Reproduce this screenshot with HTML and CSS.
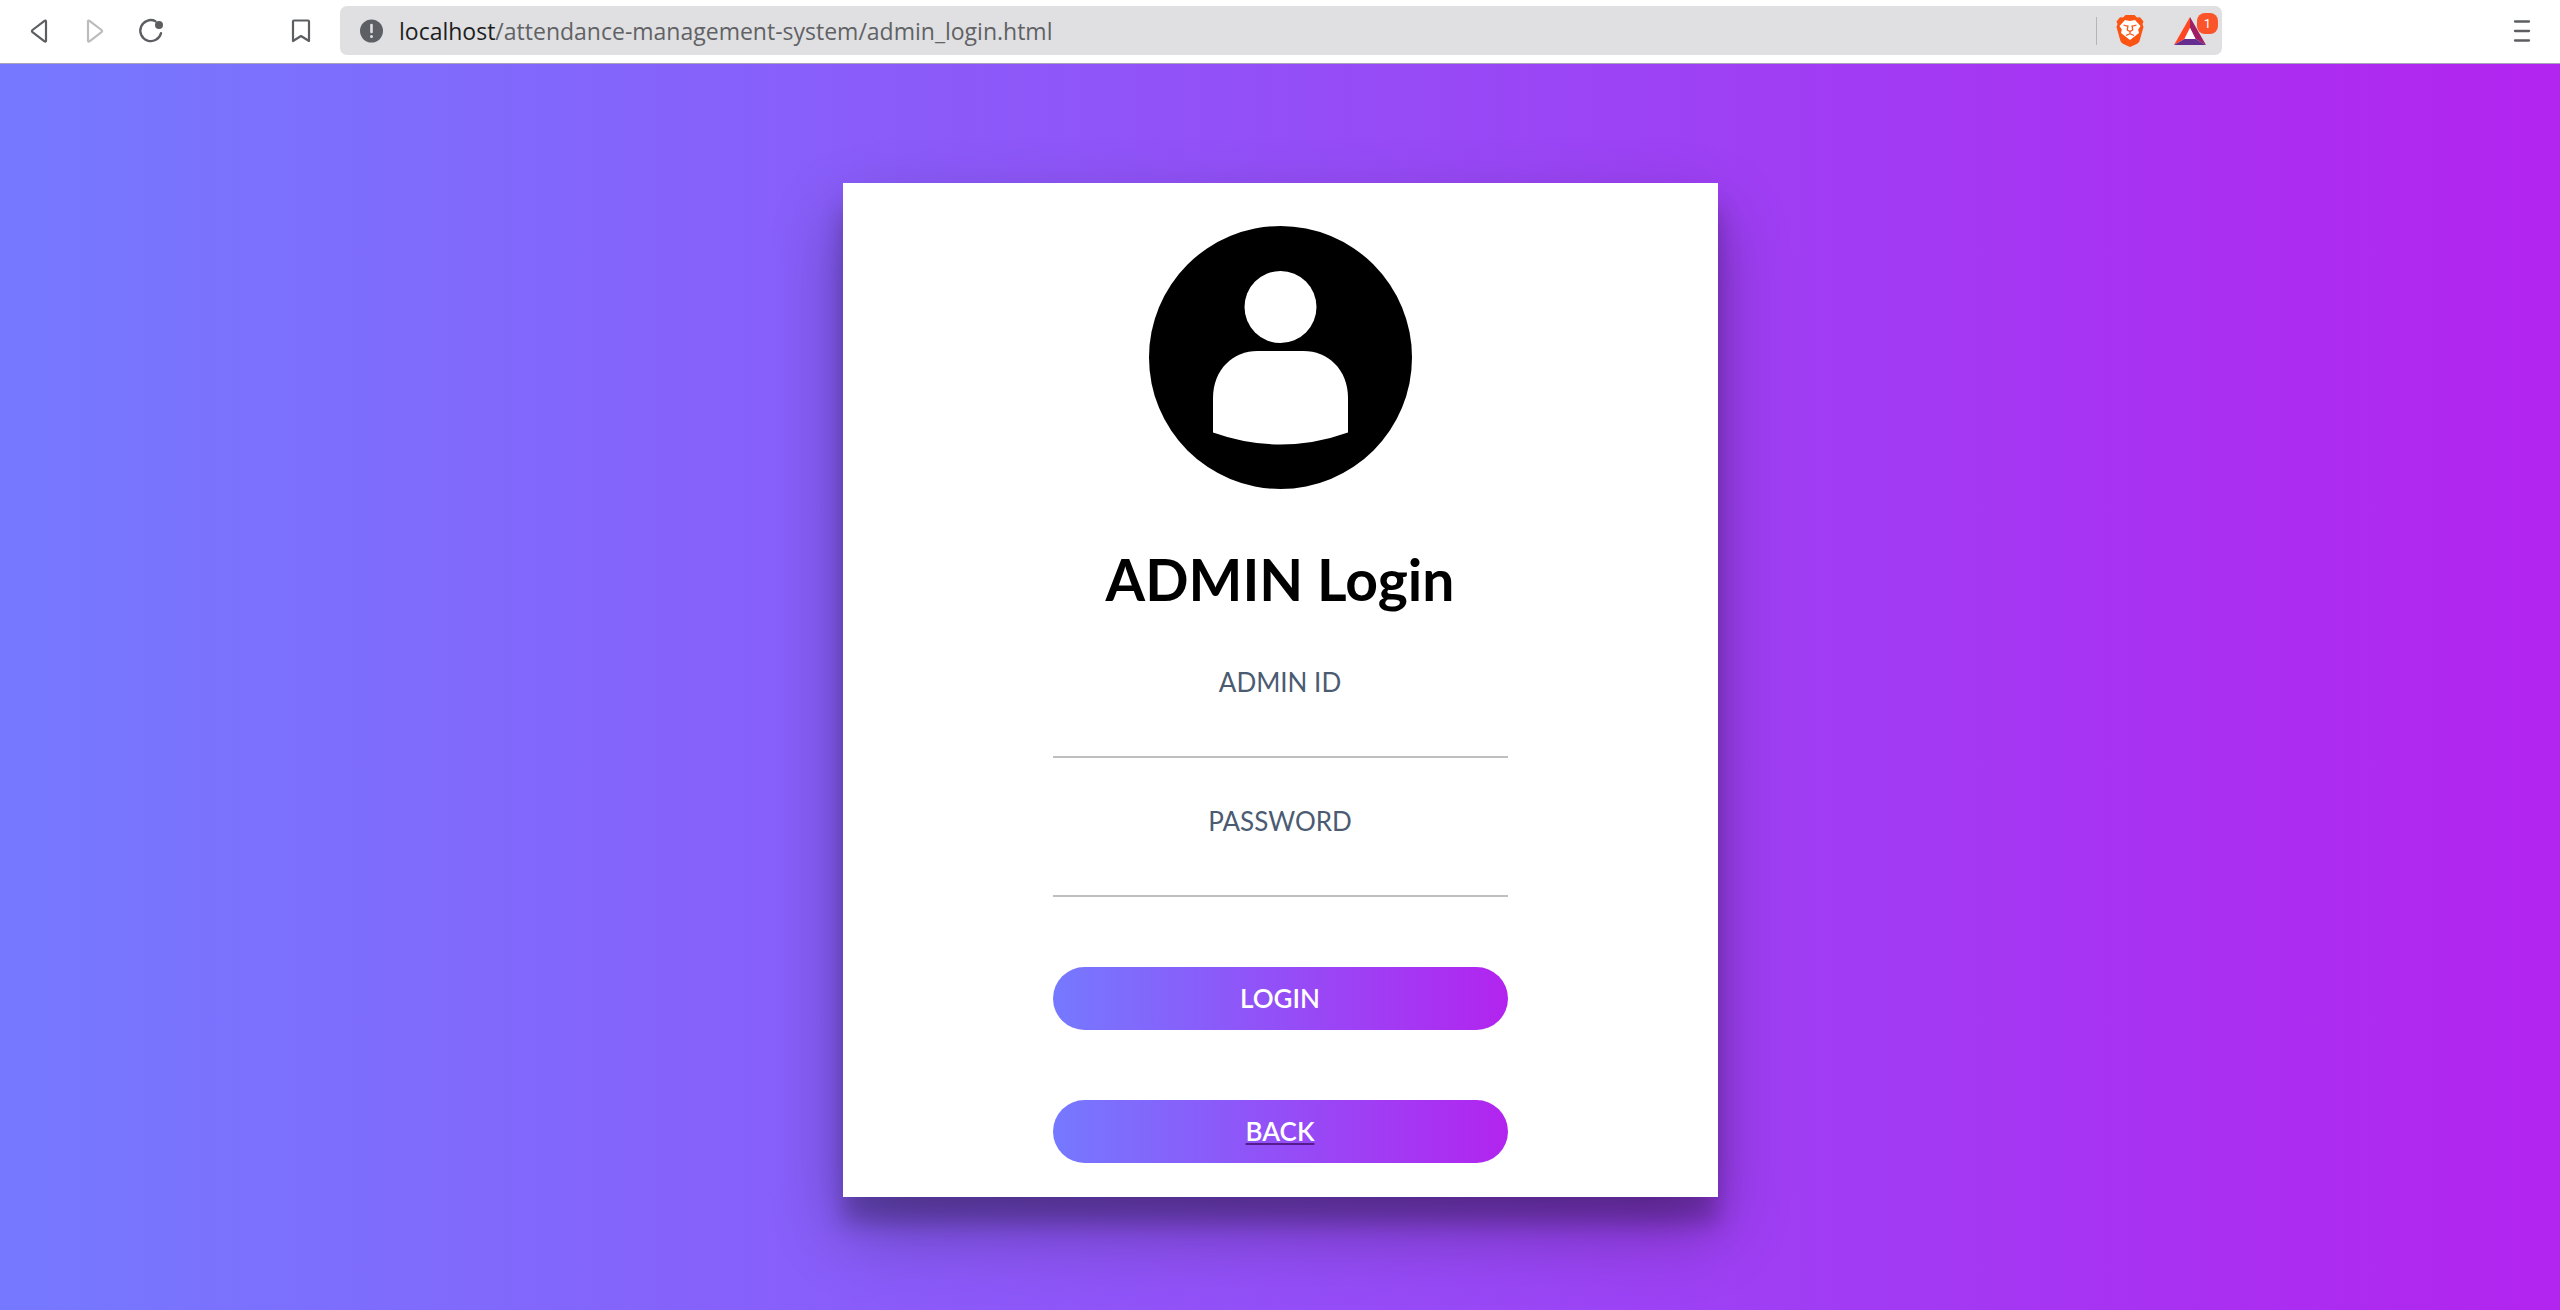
FILE: index.html
```html
<!DOCTYPE html>
<html lang="en">
<head>
<meta charset="utf-8">
<title>Admin Login</title>
<link rel="stylesheet" href="styles.css">
</head>
<body>
<header class="toolbar">
  <nav class="toolbar-nav" aria-label="Browser navigation">
    <button class="tool" type="button" aria-label="Back">
      <svg width="24" height="28" viewBox="0 0 24 28" fill="none" stroke="#5c5e62" stroke-width="2.200" stroke-linejoin="round"><path d="M19 4.500v19.200c0 .9-.8 1.200-1.500.7L5.500 15.200c-.8-.7-.8-1.500 0-2.200L17.500 3.800c.7-.5 1.500-.2 1.500.7z"/></svg>
    </button>
    <button class="tool" type="button" aria-label="Forward">
      <svg width="24" height="28" viewBox="0 0 24 28" fill="none" stroke="#bbbcbe" stroke-width="2.200" stroke-linejoin="round"><path d="M5 4.500v19.200c0 .9.8 1.200 1.500.7L18.500 15.200c.8-.7.8-1.500 0-2.200L6.500 3.800C5.800 3.300 5 3.600 5 4.500z"/></svg>
    </button>
    <button class="tool" type="button" aria-label="Reload">
      <svg width="28" height="28" viewBox="0 0 28 28" fill="none"><path d="M18.500 4.200A10.500 10.500 0 1 0 24 16.200" stroke="#5c5e62" stroke-width="2.400" stroke-linecap="round"/><circle cx="22" cy="8" r="4" fill="#5c5e62"/></svg>
    </button>
  </nav>
  <button class="tool" type="button" aria-label="Bookmark">
    <svg width="24" height="28" viewBox="0 0 24 28" fill="none" stroke="#5c5e62" stroke-width="2.200" stroke-linejoin="round"><path d="M5 3.500h14a1 1 0 0 1 1 1v19.500l-8-5-8 5v-19.500a1 1 0 0 1 1-1z"/></svg>
  </button>
  <div class="address">
    <svg class="site-info" width="23" height="24" viewBox="0 0 23 24"><circle cx="11.500" cy="12" r="11.500" fill="#5c6065"/><path d="M11.500 6v7" stroke="#e0e0e2" stroke-width="2.600" stroke-linecap="round"/><circle cx="11.500" cy="17.500" r="1.500" fill="#e0e0e2"/></svg>
    <span class="url"><span class="host">localhost</span>/attendance-management-system/admin_login.html</span>
    <div class="extensions">
      <svg width="28" height="32" viewBox="0 0 28 32"><path d="M7 2.500L9.500 0h9L21 2.500l3-.3 3.500 4.300-1 2.500 1 3-3.800 13.500c-.5 1.700-1.500 2.600-3 3.500L14 32l-6.700-3c-1.500-.9-2.500-1.800-3-3.500L.5 12l1-3-1-2.500L4 2.200z" fill="#fb5413"/><path d="M9 5l5 1 5-1 5.500 6-2.300 3.500.8 3.500-4.500 3.500-4.500 3.500-4.500-3.500L5 18l.8-3.500L3.500 11z" fill="#fff"/><path d="M7.500 10l4.500 1.300M20.500 10L16 11.300M12 10.500l-.7 4.500 2.700 1.500 2.700-1.500-.7-4.500M14 16.500v2.500M10 20.500l4-1.800 4 1.800" stroke="#fb5413" stroke-width="1.300" fill="none"/></svg>
      <div class="rewards">
        <svg width="32" height="28" viewBox="0 0 32 28"><path d="M16 0v11L10.500 22 0 28z" fill="#ff4724"/><path d="M16 0l16 28-10.500-6L16 11z" fill="#9e1f63"/><path d="M0 28l10.500-6h11L32 28z" fill="#662d91"/><path d="M16 11l5.500 11h-11z" fill="#fff"/></svg>
        <span class="badge">1</span>
      </div>
    </div>
  </div>
  <button class="tool menu" type="button" aria-label="Menu">
    <svg width="18" height="24" viewBox="0 0 18 24" stroke="#5c5e62" stroke-width="2.300" stroke-linecap="round"><path d="M2 2.500h14M2 12h14M2 21.500h14"/></svg>
  </button>
</header>
<main class="page">
  <section class="card">
    <svg class="avatar" width="263" height="263" viewBox="0 0 263 263" role="img" aria-label="User"><circle cx="131.500" cy="131.500" r="131.500" fill="#000"/><circle cx="131.500" cy="81" r="36" fill="#fff"/><path d="M64 206.500V172C64 143 84.500 125 108.500 125h46c24 0 44.500 18 44.500 47v34.500q-67.500 24-135 0z" fill="#fff"/></svg>
    <h1 class="title">ADMIN Login</h1>
    <form class="form">
      <div class="field">
        <label for="admin-id">ADMIN ID</label>
        <input id="admin-id" type="text">
      </div>
      <div class="field">
        <label for="password">PASSWORD</label>
        <input id="password" type="password">
      </div>
      <button class="action" type="submit">LOGIN</button>
      <a class="action back" href="#"><span>BACK</span></a>
    </form>
  </section>
</main>
</body>
</html>
```
FILE: styles.css
```css
* {
  box-sizing: border-box;
}

body {
  margin: 0;
  min-height: 100vh;
  display: flex;
  flex-direction: column;
  font-family: Lato, "Open Sans", sans-serif;
}

button,
input {
  font: inherit;
}

svg {
  display: block;
  flex: none;
}

.toolbar {
  display: flex;
  align-items: center;
  height: 64px;
  padding: 0 10px 2px 11px;
  background: #fff;
  border-bottom: 1px solid #aaa3b8;
}

.toolbar-nav {
  display: flex;
  margin-right: 94px;
}

.tool {
  display: flex;
  align-items: center;
  justify-content: center;
  width: 56px;
  height: 48px;
  padding: 0;
  border: 0;
  background: none;
}

.menu {
  margin-left: 272px;
}

.address {
  flex: 1;
  min-width: 0;
  display: flex;
  align-items: center;
  height: 49px;
  margin-left: 11px;
  padding: 0 16px 0 20px;
  border-radius: 7px;
  background: #e0e0e2;
}

.url {
  flex: 1;
  min-width: 0;
  margin-left: 16px;
  overflow: hidden;
  white-space: nowrap;
  font: 23px/32px "Open Sans", sans-serif;
  color: #616265;
}

.host {
  color: #1d1e22;
}

.extensions {
  display: flex;
  align-items: center;
  gap: 30px;
  height: 28px;
  padding-left: 19px;
  border-left: 1px solid #b4b5b7;
}

.rewards {
  position: relative;
}

.badge {
  position: absolute;
  top: -4px;
  right: -12px;
  width: 21px;
  height: 21px;
  border-radius: 8px;
  background: #fb542b;
  color: #fff;
  font: 13px/21px Roboto, sans-serif;
  text-align: center;
}

.page {
  flex: 1;
  display: flex;
  justify-content: center;
  align-items: flex-start;
  padding: 119px 16px 96px;
  background: linear-gradient(to right, #7579ff, #b224ef);
}

.card {
  width: 100%;
  max-width: 875px;
  display: flex;
  flex-direction: column;
  align-items: center;
  padding: 43px 0 34px;
  background: #fff;
  box-shadow: 0 33px 66px rgba(0, 0, 0, 0.3), 0 26px 21px rgba(0, 0, 0, 0.22);
}

.title {
  margin: 52px 0 48px;
  font-size: 57px;
  line-height: 76px;
  font-weight: 700;
  color: #000;
}

.form {
  width: 52%;
  display: flex;
  flex-direction: column;
}

.field {
  display: flex;
  flex-direction: column;
}

.field + .field {
  margin-top: 46px;
}

.field label {
  font-size: 26px;
  line-height: 34px;
  text-align: center;
  color: #4b5b72;
}

.field input {
  width: 100%;
  height: 59px;
  padding: 0 8px;
  border: 0;
  border-bottom: 2px solid #bfbfbf;
  outline: 0;
  background: none;
  font-size: 26px;
  text-align: center;
}

.action {
  height: 63px;
  margin-top: 70px;
  padding: 0;
  border: 0;
  border-radius: 32px;
  background: linear-gradient(to right, #7579ff, #b224ef);
  color: #fff;
  font-size: 26px;
  line-height: 63px;
  font-weight: 600;
  text-align: center;
}

.back {
  text-decoration: none;
}

.back span {
  text-decoration: underline;
  text-decoration-color: #551a8b;
  text-decoration-thickness: 2px;
  text-underline-offset: 2px;
}
```
